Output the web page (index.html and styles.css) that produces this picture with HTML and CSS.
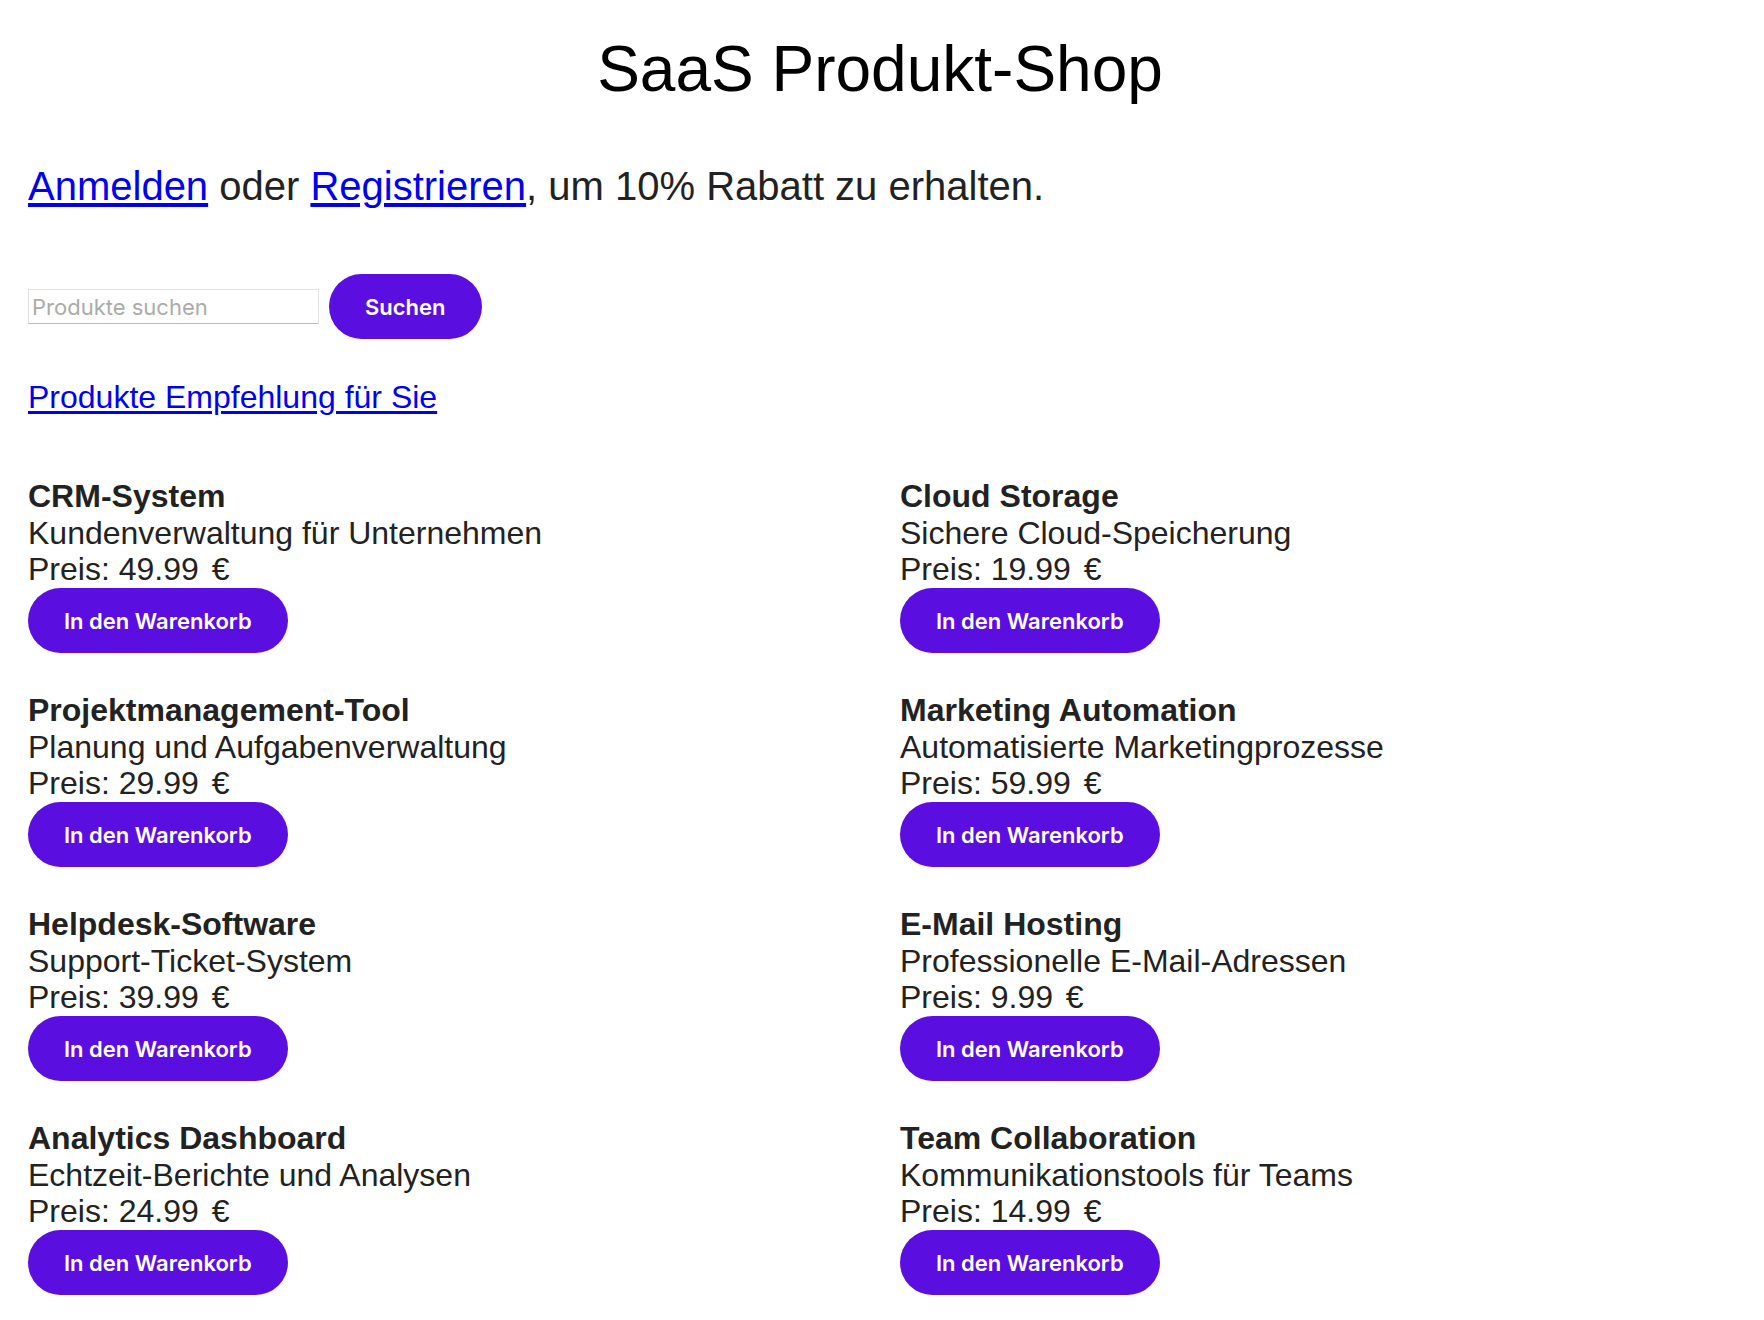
FILE: index.html
```html
<!DOCTYPE html>
<html lang="de">
<head>
<meta charset="utf-8">
<title>SaaS Produkt-Shop</title>
<link rel="stylesheet" href="styles.css">
</head>
<body>
<main class="page">
  <h1 class="title">SaaS Produkt-Shop</h1>
  <p class="promo"><a href="#" class="link">Anmelden</a> oder <a href="#" class="link">Registrieren</a>, um 10% Rabatt zu erhalten.</p>
  <form class="search" onsubmit="return false">
    <input class="search-input" type="text" placeholder="Produkte suchen">
    <button class="btn" type="submit">Suchen</button>
  </form>
  <a href="#" class="link recommend">Produkte Empfehlung für Sie</a>
  <section class="products">
    <div class="product">
      <div class="name">CRM-System</div>
      <div class="desc">Kundenverwaltung für Unternehmen</div>
      <div class="price">Preis: 49.99 <span class="cur">€</span></div>
      <button class="btn" type="button">In den Warenkorb</button>
    </div>
    <div class="product">
      <div class="name">Cloud Storage</div>
      <div class="desc">Sichere Cloud-Speicherung</div>
      <div class="price">Preis: 19.99 <span class="cur">€</span></div>
      <button class="btn" type="button">In den Warenkorb</button>
    </div>
    <div class="product">
      <div class="name">Projektmanagement-Tool</div>
      <div class="desc">Planung und Aufgabenverwaltung</div>
      <div class="price">Preis: 29.99 <span class="cur">€</span></div>
      <button class="btn" type="button">In den Warenkorb</button>
    </div>
    <div class="product">
      <div class="name">Marketing Automation</div>
      <div class="desc">Automatisierte Marketingprozesse</div>
      <div class="price">Preis: 59.99 <span class="cur">€</span></div>
      <button class="btn" type="button">In den Warenkorb</button>
    </div>
    <div class="product">
      <div class="name">Helpdesk-Software</div>
      <div class="desc">Support-Ticket-System</div>
      <div class="price">Preis: 39.99 <span class="cur">€</span></div>
      <button class="btn" type="button">In den Warenkorb</button>
    </div>
    <div class="product">
      <div class="name">E-Mail Hosting</div>
      <div class="desc">Professionelle E-Mail-Adressen</div>
      <div class="price">Preis: 9.99 <span class="cur">€</span></div>
      <button class="btn" type="button">In den Warenkorb</button>
    </div>
    <div class="product">
      <div class="name">Analytics Dashboard</div>
      <div class="desc">Echtzeit-Berichte und Analysen</div>
      <div class="price">Preis: 24.99 <span class="cur">€</span></div>
      <button class="btn" type="button">In den Warenkorb</button>
    </div>
    <div class="product">
      <div class="name">Team Collaboration</div>
      <div class="desc">Kommunikationstools für Teams</div>
      <div class="price">Preis: 14.99 <span class="cur">€</span></div>
      <button class="btn" type="button">In den Warenkorb</button>
    </div>
  </section>
</main>
</body>
</html>
```

FILE: styles.css
```css
html, body {
  margin: 0;
  padding: 0;
  background: #ffffff;
}

body {
  font-family: "Liberation Sans", Arial, Helvetica, sans-serif;
  color: #222222;
}

.page {
  padding: 0 32px 0 28px;
  display: flex;
  flex-direction: column;
  align-items: flex-start;
}

.title {
  align-self: stretch;
  margin: 32px 0 0;
  font-size: 64px;
  line-height: 74px;
  font-weight: 400;
  color: #000000;
  text-align: center;
}

.promo {
  margin: 57px 0 0;
  font-size: 40px;
  line-height: 46px;
}

.link {
  color: #0000ee;
  text-decoration: underline;
  text-underline-offset: 3px;
}

.search {
  margin-top: 65px;
  display: flex;
  align-items: center;
  gap: 10px;
}

.search-input {
  box-sizing: border-box;
  width: 291px;
  height: 35px;
  margin: 0;
  padding: 1px 3px 0;
  border: 1px solid #e2e2e2;
  border-bottom-color: #bdbdbd;
  border-radius: 0;
  font-family: Inter, "Noto Sans", sans-serif;
  font-size: 22px;
  color: #222222;
  background: #ffffff;
  outline: none;
}

.search-input::placeholder {
  color: #ababab;
}

.btn {
  box-sizing: border-box;
  height: 65px;
  margin: 0;
  padding: 0 36px;
  border: none;
  border-radius: 33px;
  background: #5a0fe0;
  color: #ffffff;
  font-family: Inter, "Noto Sans", sans-serif;
  font-weight: 600;
  font-size: 22px;
  line-height: 1;
  cursor: pointer;
}

.recommend {
  margin-top: 40px;
  font-size: 32px;
  line-height: 36.8px;
}

.products {
  align-self: stretch;
  margin-top: 62px;
  display: grid;
  grid-template-columns: 1fr 1fr;
  column-gap: 40px;
  row-gap: 38.6px;
}

.product {
  display: flex;
  flex-direction: column;
  align-items: flex-start;
  font-size: 32px;
  line-height: 36.8px;
}

.name {
  font-weight: 700;
}

.cur {
  margin-left: 4px;
}
```
